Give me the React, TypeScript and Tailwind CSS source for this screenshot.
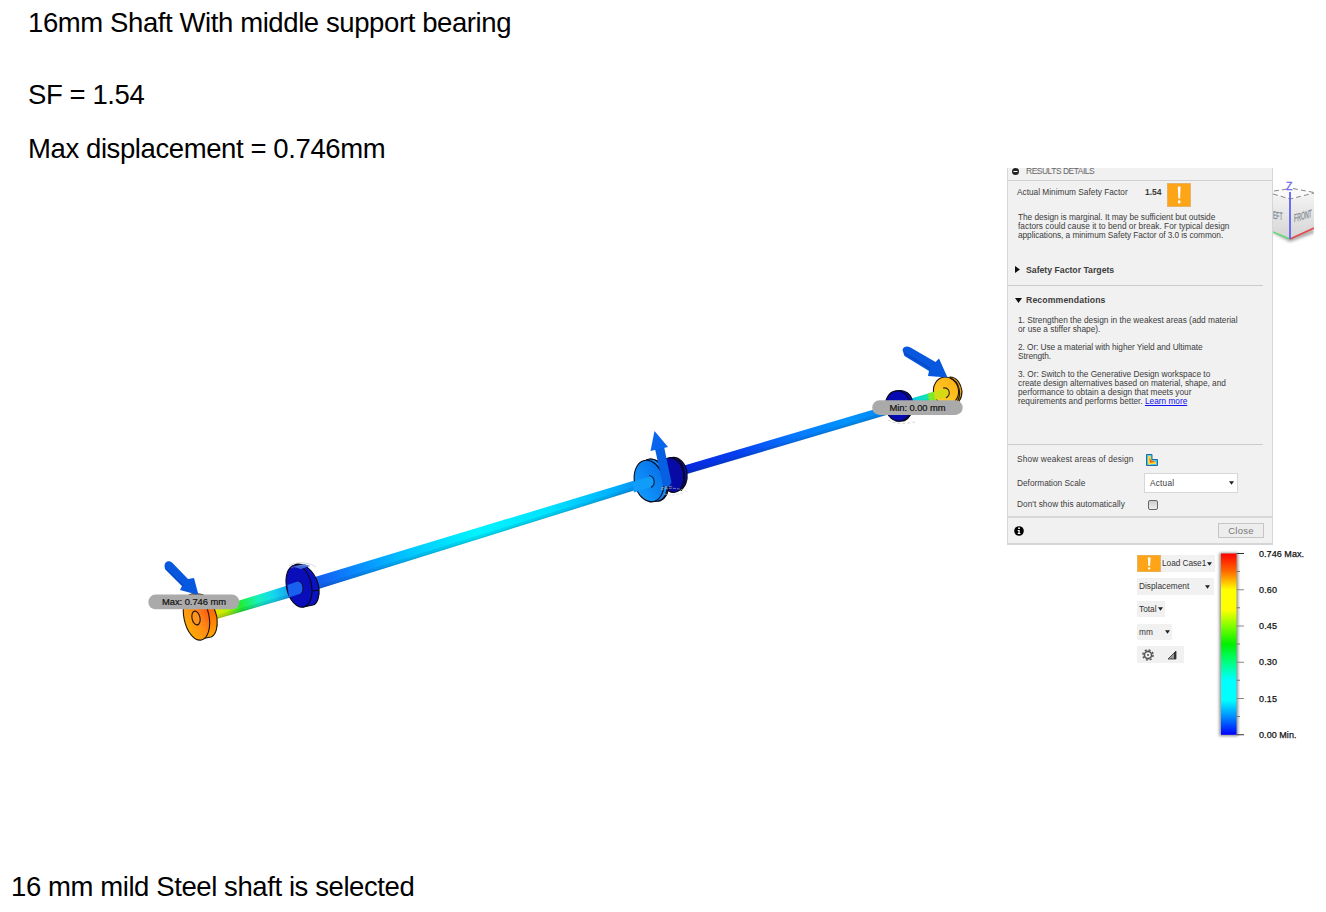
import React from "react";

const Caret = ({ className = "" }: { className?: string }) => (
  <svg className={`block h-[4px] w-[5px] shrink-0 ${className}`} viewBox="0 0 5 4">
    <path d="M0 .3h5L2.5 3.8z" fill="#222" />
  </svg>
);

const Warn = ({ className }: { className: string }) => (
  <svg className={`block shrink-0 ${className}`} viewBox="0 0 24 24" preserveAspectRatio="none">
    <rect width="24" height="24" fill="#e3b56c" />
    <rect x="1" y="1" width="22" height="22" fill="#fda516" />
    <path d="M10.8 3.5h2.8l-.5 12h-1.8zM11 17.6h2.4v2.6H11z" fill="#fff" />
  </svg>
);

const Cube = () => (
  <svg className="mt-[10px] block h-[66px] w-[41px] shrink-0" viewBox="1273 178 41 66">
    <defs>
      <linearGradient id="cubeL" x1="0" x2="0" y1="0" y2="1">
        <stop offset="0" stopColor="#f4f4f4" />
        <stop offset="1" stopColor="#d4d4d4" />
      </linearGradient>
      <filter id="soft"><feGaussianBlur stdDeviation="1.5" /></filter>
    </defs>
    <path d="M1273 233l17 9 24-9v-4l-24 6-17-6z" fill="#aaa" filter="url(#soft)" />
    <path d="M1273 191l17-3 24 4-24 7-17-4z" fill="#fafafa" />
    <path d="M1273 194l17 5v40l-17-7z" fill="url(#cubeL)" />
    <path d="M1290 199l24-6v35l-24 11z" fill="url(#cubeL)" />
    <path d="M1274 191l14-2M1293 188.500l21 4M1273 194l17 5 24-6" fill="none" stroke="#888" strokeWidth="1" strokeDasharray="5 3" />
    <path d="M1273 232l17 7" stroke="#68d878" strokeWidth="1.6" />
    <path d="M1290 239l24-11" stroke="#e44b4b" strokeWidth="1.6" />
    <path d="M1290 192v47" stroke="#605ff0" strokeWidth="1.8" />
    <text x="1286" y="190" fontSize="10.500" fontFamily="Liberation Sans, sans-serif" fill="#7068f0" stroke="#7068f0" strokeWidth=".3">Z</text>
    <text transform="matrix(.48 .08 0 1 1273 218.500)" fontSize="10.500" fontFamily="Liberation Sans, sans-serif" fill="#808890" stroke="#808890" strokeWidth=".3">EFT</text>
    <text transform="matrix(.47 -.13 0 1 1294 222)" fontSize="11" fontFamily="Liberation Sans, sans-serif" fill="#808890" stroke="#808890" strokeWidth=".3">FRONT</text>
  </svg>
);

const Model = () => (
  <svg className="block h-[310px] w-[830px]" viewBox="140 340 830 310">
    <defs>
      <linearGradient id="shaft" gradientUnits="userSpaceOnUse" x1="210" y1="612" x2="950" y2="391">
        <stop offset="0" stopColor="#ffe000" />
        <stop offset=".022" stopColor="#b4f000" />
        <stop offset=".04" stopColor="#20ee30" />
        <stop offset=".065" stopColor="#18f0c0" />
        <stop offset=".085" stopColor="#14d8ee" />
        <stop offset=".12" stopColor="#1680f0" />
        <stop offset=".15" stopColor="#145ff0" />
        <stop offset=".19" stopColor="#0a85ff" />
        <stop offset=".27" stopColor="#00c8ff" />
        <stop offset=".36" stopColor="#00f4ff" />
        <stop offset=".46" stopColor="#00e2ff" />
        <stop offset=".54" stopColor="#00b4ff" />
        <stop offset=".59" stopColor="#0c87f2" />
        <stop offset=".64" stopColor="#0627da" />
        <stop offset=".71" stopColor="#073df0" />
        <stop offset=".79" stopColor="#0878ff" />
        <stop offset=".86" stopColor="#0094ff" />
        <stop offset=".92" stopColor="#0688f5" />
        <stop offset=".95" stopColor="#07c8f0" />
        <stop offset=".975" stopColor="#18ec9a" />
        <stop offset=".99" stopColor="#a3eb08" />
        <stop offset="1" stopColor="#edc51a" />
      </linearGradient>
      <linearGradient id="hot" x1="0" x2="1" y1=".8" y2=".2">
        <stop offset="0" stopColor="#ffb000" />
        <stop offset=".55" stopColor="#ff8a16" />
        <stop offset="1" stopColor="#ff4c10" />
      </linearGradient>
      <linearGradient id="rim" x1="0" x2="0" y1="0" y2="1">
        <stop offset="0" stopColor="#ff4408" />
        <stop offset="1" stopColor="#ffac00" />
      </linearGradient>
      <linearGradient id="gold" x1="0" x2="1" y1="1" y2="0">
        <stop offset="0" stopColor="#ffd52a" />
        <stop offset="1" stopColor="#ffad14" />
      </linearGradient>
      <linearGradient id="cyan" x1="0" x2="1" y1=".8" y2=".2">
        <stop offset="0" stopColor="#129bff" />
        <stop offset="1" stopColor="#0670e8" />
      </linearGradient>
    </defs>

    {/* shaft, drawn as a tapering bar with a highlight and a shaded lower edge */}
    <path d="M212 609L300 581.5 680 466.8 945 388.5 947 397 685 474.5 304 593.5 215 619.5z" fill="url(#shaft)" />
    <path d="M215 617.5L304 591.5 685 473 947 395.500" stroke="#003a66" strokeOpacity=".12" strokeWidth="3.500" fill="none" />
    <path d="M215 618.8L304 592.8 685 474 947 396.500" stroke="#003a66" strokeOpacity=".14" strokeWidth="1.3" fill="none" />

    {/* left support bearing */}
    <g stroke="#080818" strokeWidth="1.1">
      <path d="M297 564c10-1 20 11 22 24 1 9-2 16-6 17l-10 2-8-42z" fill="#0b12c0" />
      <ellipse cx="299" cy="586" rx="12.5" ry="21.5" transform="rotate(-12 299 586)" fill="#0a0eba" />
      <path d="M313 591l6-1" fill="none" />
    </g>
    <path d="M287.500 585L299 581c4 2 5 9 2 12.5l-12 4z" fill="#1761ee" />
    <path d="M298 581c5 1 7 9 3 13" stroke="#101030" fill="none" />
    <path d="M294 567l10-3 6 2-9 3z" fill="#3d68dc" />
    <path d="M289 566c4-4 19-5 27 1M291 568c6-3 13-3 19-2" stroke="#aaa" strokeOpacity=".55" strokeWidth=".8" fill="none" />

    {/* middle bearing and centre load pulley */}
    <g stroke="#090918" strokeWidth="1.1">
      <path d="M670 458c9-3 16 6 17 15 1 8-2 15-7 17l-9 2z" fill="#0b0ebc" />
      <ellipse cx="672" cy="475" rx="11.5" ry="17.5" transform="rotate(-10 672 475)" fill="#080aa5" />
      <path d="M677 458c8 8 11 23 4 33" fill="none" />
      <path d="M650 459c11 0 18 11 19 24 0 10-4 16-9 18l-10 1z" fill="#0866df" />
      <path d="M646 460c9-4 18 5 21 18 2 12-2 22-9 23" fill="#1388f0" />
      <ellipse cx="649" cy="481" rx="14.5" ry="21" transform="rotate(-13 649 481)" fill="url(#cyan)" />
    </g>
    <path d="M632 482l18-5.500c4 2 5 7 2 10.500l-18 5.500z" fill="#109cf8" />
    <path d="M649 475.500c6 1 7 9 2 12" stroke="#102850" strokeWidth="1.2" fill="none" />
    <path d="M655 449l9-2.500 7.500 36-2.500 4-6-1z" fill="#075fe2" />
    <path d="M654.5 431L668 447l-17.5 4z" fill="#0965ee" />
    <path d="M661 490c7-3 20-2 27 2M664 494c7 2 14 1 20-2M661 488l12-2" stroke="#ccc" strokeOpacity=".7" strokeWidth=".8" strokeDasharray="3 1" fill="none" />

    {/* right bearing */}
    <path d="M888 420c5 4 18 4 27 2" stroke="#aaa" strokeOpacity=".65" strokeWidth=".8" strokeDasharray="3 2" fill="none" />
    <g stroke="#080818" strokeWidth="1.1">
      <path d="M897 391c8-2 15 3 16 13 0 8-3 14-9 17h-8z" fill="#080aa9" />
      <ellipse cx="898" cy="406" rx="12.5" ry="15.3" transform="rotate(-8 898 406)" fill="#080ab1" />
    </g>

    {/* end pulleys */}
    <g stroke="#20170c" strokeWidth="1.1">
      <path d="M198 594c9-1 16 10 19 24 1 9-1 17-6 19l-11 2z" fill="url(#rim)" />
      <ellipse cx="196.5" cy="617" rx="12.5" ry="23.5" transform="rotate(-12 196.5 617)" fill="url(#hot)" />
      <ellipse cx="196" cy="618" rx="4" ry="7" transform="rotate(-12 196 618)" fill="#ff941c" />
      <path d="M950 377c7 0 11 7 12 14 0 8-4 14-10 14z" fill="#edab12" />
      <ellipse cx="946" cy="391" rx="12.5" ry="14" transform="rotate(-12 946 391)" fill="url(#gold)" />
      <path d="M950 378c10 3 13 19 5 26" fill="none" />
    </g>
    <path d="M928 393.500l7-2v9l-6 1.500z" fill="#7de82c" />
    <path d="M934 391.500l11-3c3 1 3 6 1 8.500l-11 3z" fill="#d3dc12" />
    <path d="M943 388c6-1 9 6 3 10" stroke="#292713" strokeWidth="1.1" fill="none" />

    {/* load arrows */}
    <g fill="#0757df">
      <path d="M164.5 566c0-5 5-6 8-3l15.5 16 6-1 4.500 17-18.500-5 2-4-17-17z" />
      <path d="M902.5 350c1-4 5-4 8-2.5l25 14.5 3.5-3.5 8.5 19-19.5-1.5 1-5-24.500-15z" />
    </g>
    <path d="M166 569l17 17M904 353l26 15.500" stroke="#003bb0" strokeOpacity=".5" strokeWidth="1.500" />

    {/* probe labels */}
    <g fontFamily="Liberation Sans, sans-serif" fontSize="9.4" fill="#111">
      <rect x="148.3" y="594.6" width="91" height="14.7" rx="7.35" fill="#aaa" />
      <text x="162" y="605.2" textLength="64" stroke="#111" strokeWidth=".2">Max: 0.746 mm</text>
      <rect x="872.2" y="400.3" width="90.5" height="14.7" rx="7.35" fill="#aaa" />
      <text x="889.5" y="411" textLength="56" stroke="#111" strokeWidth=".2">Min: 0.00 mm</text>
    </g>
  </svg>
);

const Panel = () => (
  <section className="flex h-[377px] w-[266px] shrink-0 flex-col border-x border-b-2 border-[#d6d6d6] bg-[#f1f1f1] text-[8.3px] leading-[9px] text-[#3c3c3c]">
    <header className="flex h-[13px] shrink-0 items-start border-b border-[#cfcfcf] pl-[4px]">
      <svg className="h-[7px] w-[7px]" viewBox="0 0 7 7">
        <circle cx="3.5" cy="3.5" r="3.5" fill="#222" />
        <path d="M1.5 3.5h4" stroke="#fff" />
      </svg>
      <span className="-mt-px ml-[7px] whitespace-nowrap text-[8.5px] tracking-[-0.5px] text-[#666]">RESULTS DETAILS</span>
    </header>
    <div className="flex h-[32px] shrink-0 pl-[9px]">
      <span className="mt-[7px] w-[128px] whitespace-nowrap">Actual Minimum Safety Factor</span>
      <span className="mt-[7px] w-[22px] text-[8.5px] font-bold">1.54</span>
      <Warn className="mt-[2px] h-[24px] w-[24px]" />
    </div>
    <p className="h-[52px] shrink-0 whitespace-nowrap pl-[10px]">
      <span className="tracking-[-0.05px]">The design is marginal. It may be sufficient but outside</span><br />
      <span className="tracking-[0.02px]">factors could cause it to bend or break. For typical design</span><br />
      <span className="tracking-[-0.06px]">applications, a minimum Safety Factor of 3.0 is common.</span>
    </p>
    <div className="mr-[9px] flex h-[21px] shrink-0 items-start border-b border-[#cbcbcb] pl-[7px] font-bold">
      <svg className="mr-[6px] mt-px h-[7px] w-[5px]" viewBox="0 0 5 7"><path d="M0 0l5 3.5L0 7z" fill="#111" /></svg>
      <span className="mt-px text-[8.7px]">Safety Factor Targets</span>
    </div>
    <div className="flex h-[30px] shrink-0 items-start pl-[7px] pt-[10px] font-bold">
      <svg className="mr-[4px] mt-[2px] h-[5px] w-[7px]" viewBox="0 0 7 5"><path d="M0 0h7L3.5 5z" fill="#111" /></svg>
      <span className="text-[8.7px] tracking-[0.12px]">Recommendations</span>
    </div>
    <div className="mr-[9px] flex h-[129px] shrink-0 flex-col gap-[9px] whitespace-nowrap border-b border-[#cbcbcb] pl-[10px]">
      <p>1. Strengthen the design in the weakest areas (add material<br />or use a stiffer shape).</p>
      <p className="tracking-[-0.07px]">2. Or: Use a material with higher Yield and Ultimate<br />Strength.</p>
      <p className="tracking-[-0.01px]">3. Or: Switch to the Generative Design workspace to<br />create design alternatives based on material, shape, and<br />performance to obtain a design that meets your<br />requirements and performs better. <a className="text-[#1010ef] underline">Learn more</a></p>
    </div>
    <div className="flex h-[29px] shrink-0 items-center pl-[9px]">
      <span className="w-[129px] whitespace-nowrap tracking-[0.14px]">Show weakest areas of design</span>
      <svg className="h-[12px] w-[12px]" viewBox="0 0 12 12">
        <path d="M.5.5h5.500v5h5.500v6H.5z" fill="#42cce4" stroke="#2469b0" />
        <path d="M2 1.500l3 1v3.500l5 2v2L6 10l-3 1-1-2z" fill="#ffd83d" />
        <path d="M3.5 4l2 2.5 4 1.500-4 .4L4 9z" fill="#f05b16" />
      </svg>
    </div>
    <div className="-mt-px flex h-[20px] shrink-0 items-center pl-[9px]">
      <span className="w-[127px] whitespace-nowrap">Deformation Scale</span>
      <div className="flex h-[20px] w-[94px] items-center justify-between border border-[#d7d7d7] bg-white pl-[5px] pr-[3px] tracking-[0.2px]">Actual<Caret /></div>
    </div>
    <div className="flex h-[23px] shrink-0 items-center pl-[9px]">
      <span className="w-[131px] whitespace-nowrap tracking-[0.04px]">Don't show this automatically</span>
      <div className="h-[10px] w-[10px] rounded-[2px] border border-[#666] bg-linear-to-b from-[#ccc] to-[#eee]" />
    </div>
    <footer className="flex min-h-0 flex-1 items-center justify-between border-t-2 border-[#d8d8d8] pl-[6px] pr-[8px]">
      <svg className="h-[10px] w-[10px]" viewBox="0 0 10 10">
        <circle cx="5" cy="5" r="4.8" fill="#000" />
        <path d="M4.2 1.5h1.7v1.4H4.2zM3.7 4h2v3h.7v1H3.7V7h.7V5h-.7z" fill="#fff" />
      </svg>
      <div className="flex h-[15px] w-[46px] items-center justify-center border border-[#c6c6c6] bg-[#ededed] text-[9.5px] tracking-[0.25px] text-[#777]">Close</div>
    </footer>
  </section>
);

const ticks = ["0.746 Max.", "0.60", "0.45", "0.30", "0.15", "0.00 Min."];

const Legend = () => (
  <div className="flex pl-[130px] pt-[3px]">
    <div className="flex w-[83px] flex-col items-start whitespace-nowrap text-[8.3px] leading-[9px] text-[#333]">
      <div className="mt-[7px] flex h-[17px] w-[78px] items-center bg-[#f1f1f1] tracking-[-0.05px]">
        <Warn className="mr-px h-[17px] w-[24px]" />Load Case1<Caret className="ml-px" />
      </div>
      <div className="mt-[6px] flex h-[17px] w-[77px] items-center justify-between bg-[#f1f1f1] pl-[2px] pr-[4px]">Displacement<Caret /></div>
      <div className="mt-[6px] flex h-[16px] w-[28px] items-center justify-between bg-[#f1f1f1] pl-[2px] pr-[2px]">Total<Caret /></div>
      <div className="mt-[7px] flex h-[16px] w-[35px] items-center justify-between bg-[#f1f1f1] pl-[2px] pr-[2px]">mm<Caret /></div>
      <div className="mt-[6px] flex h-[17px] w-[47px] items-center bg-[#f1f1f1] pl-[5px]">
        <svg className="h-[12px] w-[12px]" viewBox="0 0 12 12">
          <circle cx="6" cy="6" r="5.100" fill="none" stroke="#555" strokeWidth="1.500" strokeDasharray="2 2.005" />
          <circle cx="6" cy="6" r="3.600" fill="none" stroke="#555" strokeWidth="1.600" />
          <circle cx="6" cy="6" r="1" fill="#555" />
        </svg>
        <svg className="ml-[13px] h-[10px] w-[10px]" viewBox="0 0 10 10"><path d="M9 1v8H1z" fill="#999" stroke="#333" strokeWidth=".8" /><path d="M9 1v8H7V3z" fill="#333" /></svg>
      </div>
    </div>
    <svg className="block h-[194px] w-[94px]" viewBox="1220 548 94 194" overflow="visible">
      <defs>
        <linearGradient id="scale" x1="0" x2="0" y1="0" y2="1">
          <stop offset="0" stopColor="#f00" />
          <stop offset=".1" stopColor="#ff6b00" />
          <stop offset=".2" stopColor="#ff0" />
          <stop offset=".31" stopColor="#ff0" />
          <stop offset=".4" stopColor="#80ff00" />
          <stop offset=".5" stopColor="#00f000" />
          <stop offset=".6" stopColor="#00ff80" />
          <stop offset=".7" stopColor="#0ff" />
          <stop offset=".81" stopColor="#0ff" />
          <stop offset=".9" stopColor="#008cff" />
          <stop offset="1" stopColor="#00f" />
        </linearGradient>
        <filter id="shadow" x="-.4" width="1.8"><feGaussianBlur stdDeviation="1.5" /></filter>
      </defs>
      <rect x="1219.5" y="553" width="18.5" height="183" fill="#888" filter="url(#shadow)" />
      <rect x="1221" y="553.5" width="15.5" height="181.3" fill="url(#scale)" />
      {ticks.map((label, i) => (
        <g key={label}>
          <path d={`M1236.5 ${553.5 + i * 36.25}h7.5`} stroke={i === 0 || i === 5 ? "#333" : "#888"} />
          {i < 5 && <path d={`M1236.5 ${571.5 + i * 36.25}h3.5`} stroke="#777" />}
          <text x="1259" y={556.5 + i * 36.25} textLength={i === 0 ? 45 : i === 5 ? 37.5 : 18} fontSize="9" fontFamily="Liberation Sans, sans-serif" fill="#111" stroke="#111" strokeWidth=".25">{label}</text>
        </g>
      ))}
    </svg>
  </div>
);

export default function App() {
  return (
    <main className="flex h-[912px] w-[1326px] flex-col overflow-hidden bg-white font-['Liberation_Sans',Arial,sans-serif] text-black">
      <div className="flex h-[168px] shrink-0 flex-col whitespace-nowrap pl-[28px] pt-[7px] text-[27.5px] leading-[31px] tracking-[-0.4px]">
        <h1>16mm Shaft With middle support bearing</h1>
        <p className="mt-[41px]">SF = 1.54</p>
        <p className="mt-[23px]">Max displacement = 0.746mm</p>
      </div>
      <div className="flex h-[700px] shrink-0">
        <div className="w-[1007px] shrink-0 pl-[140px] pt-[172px]"><Model /></div>
        <div className="flex flex-col">
          <div className="flex"><Panel /><Cube /></div>
          <Legend />
        </div>
      </div>
      <p className="ml-[11px] mt-[3px] whitespace-nowrap text-[27.5px] leading-[31px] tracking-[-0.41px]">16 mm mild Steel shaft is selected</p>
    </main>
  );
}
